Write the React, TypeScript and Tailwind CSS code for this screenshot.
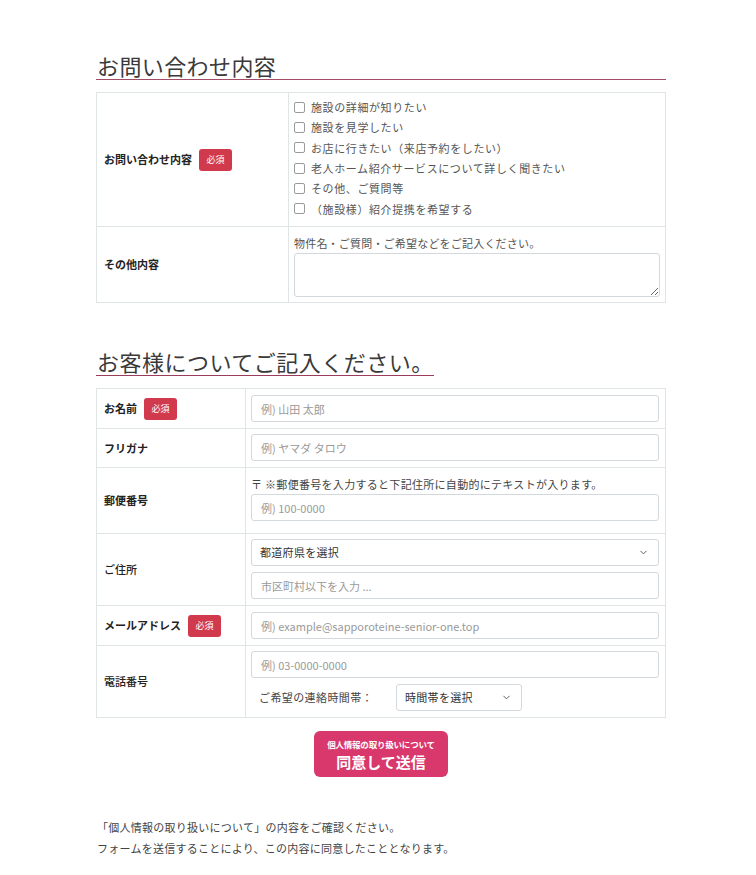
import { ChevronDown } from "lucide-react";

const font = { fontFamily: '"Noto Sans CJK JP", "Noto Sans", sans-serif' };

const inquiryOptions = [
  "施設の詳細が知りたい",
  "施設を見学したい",
  "お店に行きたい（来店予約をしたい）",
  "老人ホーム紹介サービスについて詳しく聞きたい",
  "その他、ご質問等",
  "（施設様）紹介提携を希望する",
];

function Required() {
  return (
    <span className="ml-[7px] inline-flex h-[22px] w-[33px] items-center justify-center rounded-[3px] bg-[#d13a4d] text-[9px] font-normal text-white">
      必須
    </span>
  );
}

function TextInput({ placeholder }: { placeholder: string }) {
  return (
    <input
      type="text"
      placeholder={placeholder}
      className="block h-[27px] w-full rounded-[3px] border border-[#d3d8dc] bg-white px-[9px] text-[11px] text-[#333] placeholder:text-[#9a9a9a] focus:outline-none"
    />
  );
}

function SelectBox({ label, className }: { label: string; className: string }) {
  return (
    <div className={`relative ${className}`}>
      <select className="block h-[27px] w-full appearance-none rounded-[3px] border border-[#d3d8dc] bg-white px-[8px] text-[11px] tracking-[0.3px] text-[#333] focus:outline-none">
        <option>{label}</option>
      </select>
      <ChevronDown
        size={11}
        strokeWidth={2}
        className="pointer-events-none absolute right-[10px] top-[8px] text-[#555]"
      />
    </div>
  );
}

export default function App() {
  return (
    <div className="min-h-screen bg-white text-[#333]" style={font}>
      <div className="ml-[96px] w-[570px] pt-[51px] pb-[20px]">
        {/* お問い合わせ内容 */}
        <h2 className="border-b border-[#a04d65] pl-px text-[22px] leading-[28px] font-normal tracking-[0.4px] text-[#3a3a3a]">
          お問い合わせ内容
        </h2>

        <div className="mt-[12px] border border-[#dfe4e4]">
          <div className="flex h-[133px]">
            <div className="flex w-[192px] items-center border-r border-[#dfe4e4] pl-[7px] text-[11px] font-bold text-[#222]">
              お問い合わせ内容
              <Required />
            </div>
            <div className="flex flex-1 flex-col justify-center pl-[5px] pb-[3px]">
              {inquiryOptions.map((opt) => (
                <label
                  key={opt}
                  className="flex h-[20.4px] items-center text-[11px] tracking-[0.6px] text-[#555]"
                >
                  <span className="mr-[6px] inline-block h-[11px] w-[11px] rounded-[2px] border border-[#9a9a9a] bg-white" />
                  {opt}
                </label>
              ))}
            </div>
          </div>
          <div className="flex h-[76px] border-t border-[#dfe4e4]">
            <div className="flex w-[192px] items-center border-r border-[#dfe4e4] pl-[7px] text-[11px] font-bold text-[#222]">
              その他内容
            </div>
            <div className="flex-1 pl-[5px] pr-[5px] pt-[8px]">
              <p className="text-[11px] leading-[16px] tracking-[0.2px] text-[#555]">
                物件名・ご質問・ご希望などをご記入ください。
              </p>
              <textarea className="mt-[2px] block h-[44px] w-full rounded-[3px] border border-[#d3d8dc] bg-white focus:outline-none" />
            </div>
          </div>
        </div>

        {/* お客様について */}
        <h2 className="mt-[44px] inline-block border-b border-[#9a3d5c] pl-px text-[22px] leading-[28px] font-normal tracking-[0.5px] text-[#3a3a3a]">
          お客様についてご記入ください。
        </h2>

        <div className="mt-[12px] border border-[#dfe4e4]">
          <div className="flex">
            <div className="flex w-[149px] items-center border-r border-[#dfe4e4] pl-[7px] text-[11px] font-bold text-[#222]">
              お名前
              <Required />
            </div>
            <div className="flex-1 py-[6px] pl-[5px] pr-[6px]">
              <TextInput placeholder="例) 山田 太郎" />
            </div>
          </div>

          <div className="flex border-t border-[#dfe4e4]">
            <div className="flex w-[149px] items-center border-r border-[#dfe4e4] pl-[7px] text-[11px] font-bold text-[#222]">
              フリガナ
            </div>
            <div className="flex-1 pt-[5px] pb-[6px] pl-[5px] pr-[6px]">
              <TextInput placeholder="例) ヤマダ タロウ" />
            </div>
          </div>

          <div className="flex border-t border-[#dfe4e4]">
            <div className="flex w-[149px] items-center border-r border-[#dfe4e4] pl-[7px] text-[11px] font-bold text-[#222]">
              郵便番号
            </div>
            <div className="flex-1 pt-[7px] pb-[12px] pl-[5px] pr-[6px]">
              <p className="text-[11px] leading-[18px] tracking-[0.3px] text-[#444]">
                〒 ※郵便番号を入力すると下記住所に自動的にテキストが入ります。
              </p>
              <div className="mt-px">
                <TextInput placeholder="例) 100-0000" />
              </div>
            </div>
          </div>

          <div className="flex border-t border-[#dfe4e4]">
            <div className="flex w-[149px] items-center border-r border-[#dfe4e4] pl-[7px] text-[11px] font-medium text-[#222]">
              ご住所
            </div>
            <div className="flex flex-1 flex-col gap-[6px] pt-[5px] pb-[6px] pl-[5px] pr-[6px]">
              <SelectBox label="都道府県を選択" className="w-full" />
              <TextInput placeholder="市区町村以下を入力 ..." />
            </div>
          </div>

          <div className="flex border-t border-[#dfe4e4]">
            <div className="flex w-[149px] items-center border-r border-[#dfe4e4] pl-[7px] text-[11px] font-bold text-[#222]">
              メールアドレス
              <Required />
            </div>
            <div className="flex-1 py-[6px] pl-[5px] pr-[6px]">
              <TextInput placeholder="例) example@sapporoteine-senior-one.top" />
            </div>
          </div>

          <div className="flex border-t border-[#dfe4e4]">
            <div className="flex w-[149px] items-center border-r border-[#dfe4e4] pl-[7px] text-[11px] font-medium text-[#222]">
              電話番号
            </div>
            <div className="flex flex-1 flex-col gap-[6px] pt-[5px] pb-[6px] pl-[5px] pr-[6px]">
              <TextInput placeholder="例) 03-0000-0000" />
              <div className="flex items-center">
                <span className="ml-[8px] w-[137px] text-[11px] tracking-[0.4px] text-[#444]">
                  ご希望の連絡時間帯：
                </span>
                <SelectBox label="時間帯を選択" className="w-[126px]" />
              </div>
            </div>
          </div>
        </div>

        <div className="mt-[13px] flex justify-center">
          <button
            type="button"
            className="flex h-[46px] w-[134px] flex-col items-center justify-center rounded-[6px] bg-[#d8386c] font-bold text-white"
          >
            <span className="text-[8.5px] leading-[12px] tracking-[-0.2px]">個人情報の取り扱いについて</span>
            <span className="mt-[3px] text-[15px] leading-[18px]">同意して送信</span>
          </button>
        </div>

        <div className="mt-[40px] pl-px text-[11px] leading-[21px] tracking-[0.25px] text-[#444]">
          <p>「個人情報の取り扱いについて」の内容をご確認ください。</p>
          <p>フォームを送信することにより、この内容に同意したこととなります。</p>
        </div>
      </div>
    </div>
  );
}
